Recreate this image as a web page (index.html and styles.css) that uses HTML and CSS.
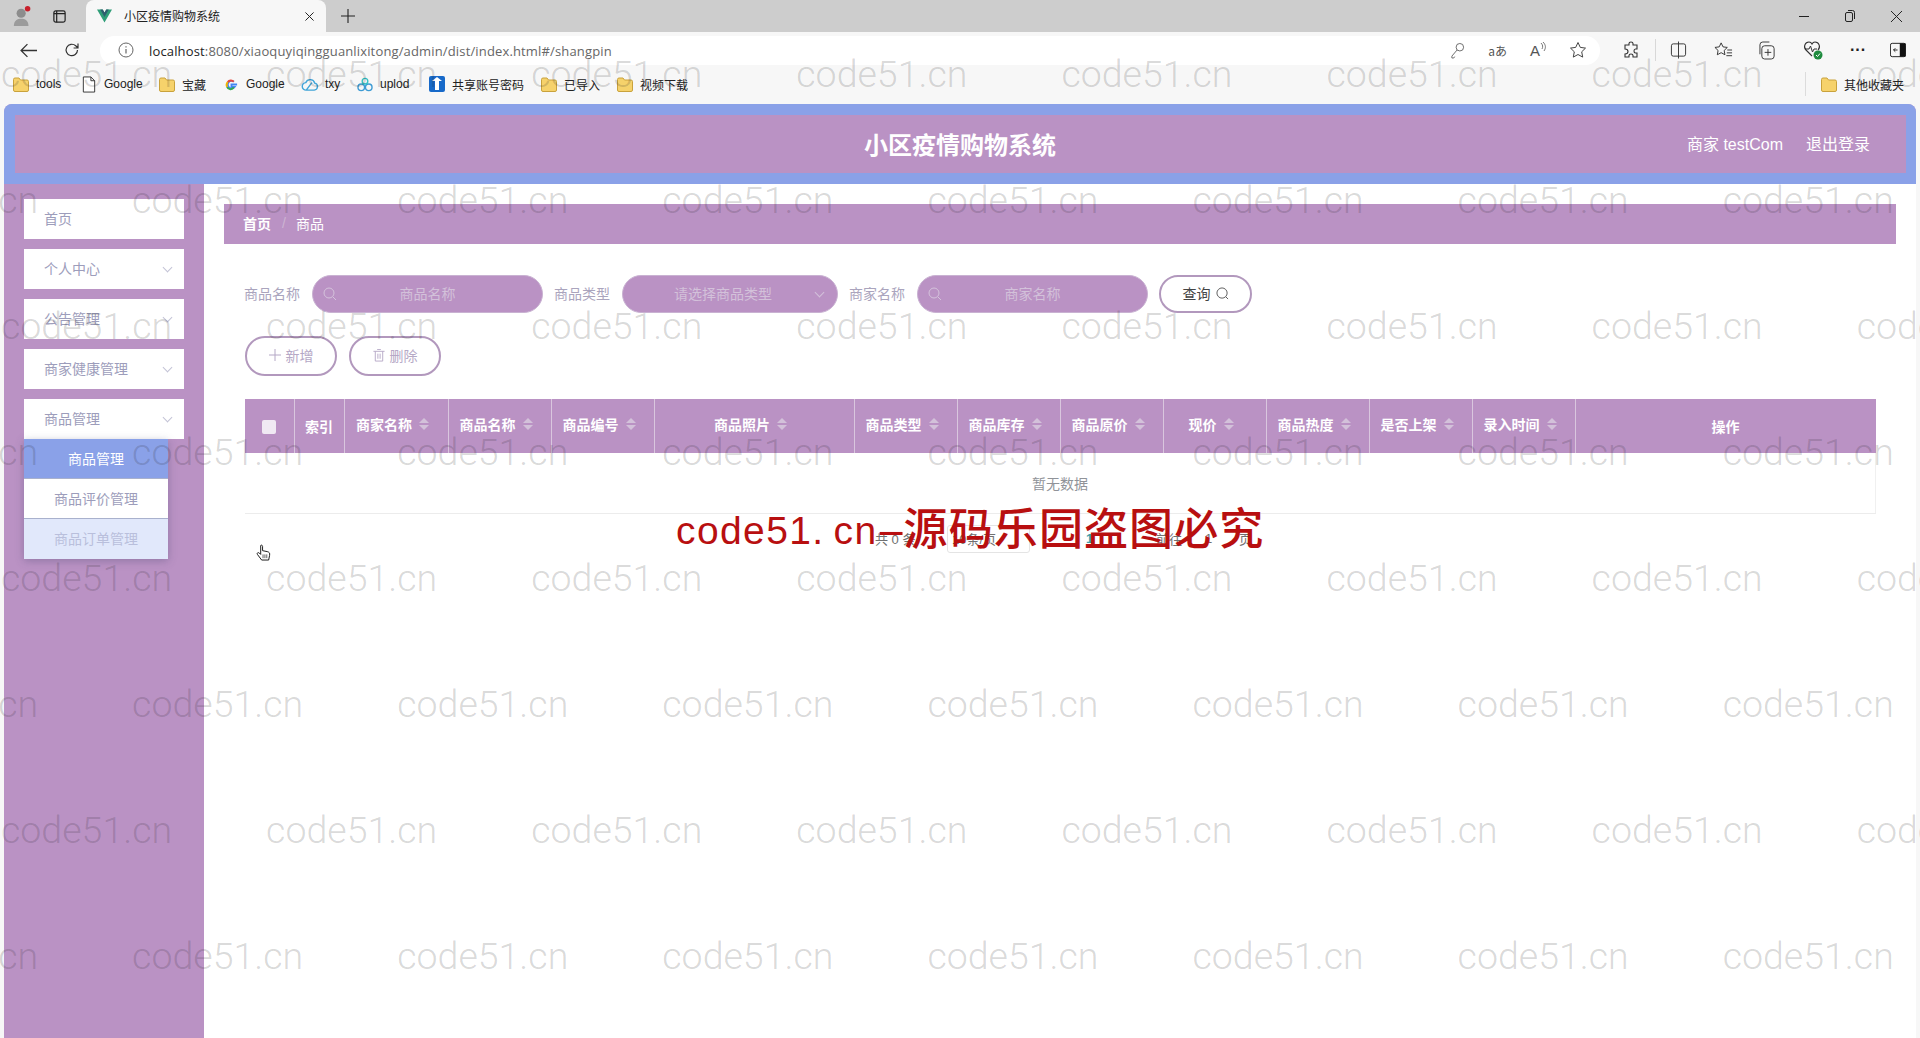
FILE: index.html
```html
<!DOCTYPE html>
<html lang="zh-CN">
<head>
<meta charset="utf-8">
<title>小区疫情购物系统</title>
<link rel="stylesheet" href="styles.css">
</head>
<body>
<div class="tabbar">
  <svg class="ic profile" viewBox="0 0 24 24" width="22" height="24"><circle cx="10" cy="9" r="5" fill="#8d8d8d"/><path d="M2 23c0-6 4-8 8-8s8 2 8 8z" fill="#9b9b9b"/><circle cx="17" cy="4" r="3" fill="#c8202c"/></svg>
  <svg class="ic winbtn" viewBox="0 0 16 16" width="15" height="15"><rect x="2" y="2" width="12" height="12" rx="2" fill="none" stroke="#222" stroke-width="1.3"/><path d="M2 5h12M5 2v12" stroke="#222" stroke-width="1.3"/></svg>
  <div class="tab">
    <svg class="ic" viewBox="0 0 16 14" width="15" height="14"><path d="M0 0h6l2 3.500L10 0h6L8 14z" fill="#2f9e78"/><path d="M3.500 0h2.700L8 3.300 9.800 0h2.700L8 8z" fill="#2f5f6f"/></svg>
    <span class="tab-title">小区疫情购物系统</span>
    <svg class="ic tab-x" viewBox="0 0 10 10" width="9" height="9"><path d="M.5.500l9 9M9.500.500l-9 9" stroke="#222" stroke-width="1.100"/></svg>
  </div>
  <svg class="ic plus" viewBox="0 0 14 14" width="14" height="14"><path d="M7 0v14M0 7h14" stroke="#222" stroke-width="1.100"/></svg>
  <div class="winctl">
    <svg class="ic" viewBox="0 0 10 10" width="10" height="10"><path d="M0 5.500h10" stroke="#222"/></svg>
    <svg class="ic" viewBox="0 0 10 12" width="10" height="12"><rect x=".5" y="2.500" width="7" height="9" rx="1.500" fill="none" stroke="#222"/><path d="M3 .500h4.500a2 2 0 0 1 2 2V9" fill="none" stroke="#222"/></svg>
    <svg class="ic" viewBox="0 0 10 10" width="11" height="11"><path d="M0 0l10 10M10 0L0 10" stroke="#222" stroke-width=".9"/></svg>
  </div>
</div>

<div class="toolbar">
  <svg class="ic back" viewBox="0 0 16 14" width="17" height="15"><path d="M16 7H1M7 1L1 7l6 6" fill="none" stroke="#333" stroke-width="1.200"/></svg>
  <svg class="ic reload" viewBox="0 0 16 16" width="16" height="16"><path d="M13.500 8a5.700 5.700 0 1 1-1.800-4.200L14 6M14 1.500V6H9.600" fill="none" stroke="#333" stroke-width="1.200"/></svg>
  <div class="addr">
    <svg class="ic" viewBox="0 0 16 16" width="16" height="16"><circle cx="8" cy="8" r="7" fill="none" stroke="#666"/><path d="M8 7v4.500M8 4.200v1.300" stroke="#666" stroke-width="1.200"/></svg>
    <span class="url"><b>localhost</b>:8080/xiaoquyiqingguanlixitong/admin/dist/index.html#/shangpin</span>
    <div class="addr-tools">
      <svg class="ic" viewBox="0 0 16 18" width="15" height="17"><circle cx="10.500" cy="5.500" r="4" fill="none" stroke="#666"/><path d="M7.500 8.500L2 15v2h2l1-1.500" fill="none" stroke="#666"/></svg>
      <span class="aa">aあ</span>
      <span class="ra">A<svg class="ic" viewBox="0 0 6 12" width="6" height="12"><path d="M1 1c2 2 2 4 1 6M3 0c3 3 3 6 1 9" fill="none" stroke="#555" stroke-width=".8"/></svg></span>
      <svg class="ic" viewBox="0 0 18 18" width="18" height="18"><path d="M9 1.500l2.300 4.900 5.200.7-3.800 3.700 1 5.300L9 13.500l-4.700 2.600 1-5.300L1.500 7.100l5.200-.7z" fill="none" stroke="#444" stroke-width="1"/></svg>
    </div>
  </div>
  <div class="tools">
    <svg class="ic" viewBox="0 0 18 18" width="18" height="18"><path d="M7 2.500c0-2 4-2 4 0V4h4v4h-1.500c-2 0-2 4 0 4H15v4h-4v-1.500c0-2-4-2-4 0V16H3v-3c2 0 3-1 3-2.500S5 8 3 8V4h4z" fill="none" stroke="#333" stroke-width="1.100"/></svg>
    <span class="sep"></span>
    <svg class="ic" viewBox="0 0 18 18" width="17" height="18"><rect x="1.500" y="2.500" width="15" height="13" rx="2" fill="none" stroke="#333"/><path d="M9 0v18" stroke="#333"/></svg>
    <svg class="ic" viewBox="0 0 20 18" width="19" height="18"><path d="M7.500 1.500l2 4.200 4.500.6-3.300 3.200.8 4.500-4-2.200-4 2.200.8-4.500L1 6.300l4.500-.6zM14 9h5M13.500 12H19M13 15h6" fill="none" stroke="#333"/></svg>
    <svg class="ic" viewBox="0 0 18 20" width="17" height="19"><rect x="3" y="5" width="13" height="14" rx="3" fill="none" stroke="#333"/><path d="M1 14V4a3 3 0 0 1 3-3h7M9.500 8.500v7M6 12h7" fill="none" stroke="#333"/></svg>
    <span class="heart"><svg class="ic" viewBox="0 0 20 20" width="20" height="20"><path d="M9 16L3 10C0 7 2 2 6 2c1.500 0 2.500 1 3 2 .5-1 1.500-2 3-2 4 0 6 5 3 8" fill="none" stroke="#333" stroke-width="1.100"/><path d="M2 9h4l1.500-3 2 6 1.500-3h3" fill="none" stroke="#333"/><circle cx="15" cy="15" r="4.500" fill="#1f8c3f"/><path d="M13 15l1.500 1.500 2.500-3" fill="none" stroke="#fff"/></svg></span>
    <span class="dots">···</span>
    <svg class="ic side-ic" viewBox="0 0 18 18" width="16" height="16"><rect x=".5" y="1.500" width="17" height="15" rx="2" fill="none" stroke="#111"/><rect x="11" y="1.500" width="6.500" height="15" fill="#111"/><path d="M8.500 9H4M6 7L4 9l2 2" fill="none" stroke="#111"/></svg>
  </div>
</div>

<div class="bookmarks">
  <span class="bm"><svg viewBox="0 0 16 15" width="16" height="15"><path d="M.5 2.500a1.500 1.500 0 0 1 1.500-1.500h4l1.500 2H14a1.500 1.500 0 0 1 1.500 1.500V13a1.500 1.500 0 0 1-1.500 1.500H2A1.500 1.500 0 0 1 .5 13z" fill="#f6d26b" stroke="#c9a23c"/></svg>tools</span>
  <span class="bm"><svg viewBox="0 0 14 18" width="13" height="17"><path d="M1 1h8l4 4v12H1zM9 1v4h4" fill="#fff" stroke="#333"/></svg>Google</span>
  <span class="bm"><svg viewBox="0 0 16 15" width="16" height="15"><path d="M.5 2.500a1.500 1.500 0 0 1 1.500-1.500h4l1.500 2H14a1.500 1.500 0 0 1 1.500 1.500V13a1.500 1.500 0 0 1-1.500 1.500H2A1.500 1.500 0 0 1 .5 13z" fill="#f6d26b" stroke="#c9a23c"/></svg>宝藏</span>
  <span class="bm"><svg viewBox="0 0 16 16" width="14" height="15"><path d="M14.500 8H8.500v2.500h3.300A4 4 0 1 1 11 5" fill="none" stroke="#4285f4" stroke-width="2"/><path d="M4.500 5.500A4.200 4.200 0 0 1 11 5" fill="none" stroke="#e8483c" stroke-width="2"/><path d="M3.800 10.500A4 4 0 0 0 11 11" fill="none" stroke="#34a853" stroke-width="2"/><path d="M3.800 10.500a4.500 4.500 0 0 1 .7-5" fill="none" stroke="#f5b400" stroke-width="2"/></svg>Google</span>
  <span class="bm"><svg viewBox="0 0 18 16" width="17" height="15"><path d="M5 14a4 4 0 0 1-.5-8A5 5 0 0 1 14 6.500 3.800 3.800 0 0 1 13.500 14zM5 14l6-8" fill="none" stroke="#41a5d8" stroke-width="1.500"/></svg>txy</span>
  <span class="bm"><svg viewBox="0 0 18 16" width="17" height="15"><circle cx="5" cy="11" r="3.500" fill="none" stroke="#3d9bd4" stroke-width="1.500"/><circle cx="13" cy="11" r="3.500" fill="none" stroke="#3d9bd4" stroke-width="1.500"/><circle cx="9" cy="4.500" r="3" fill="none" stroke="#35c0c4" stroke-width="1.500"/></svg>uplod</span>
  <span class="bm"><svg viewBox="0 0 16 16" width="15" height="16"><rect width="16" height="16" rx="2" fill="#1769c9"/><path d="M3 5l5-4 5 4h-3v9H6V5z" fill="#fff"/></svg>共享账号密码</span>
  <span class="bm"><svg viewBox="0 0 16 15" width="16" height="15"><path d="M.5 2.500a1.500 1.500 0 0 1 1.500-1.500h4l1.500 2H14a1.500 1.500 0 0 1 1.500 1.500V13a1.500 1.500 0 0 1-1.500 1.500H2A1.500 1.500 0 0 1 .5 13z" fill="#f6d26b" stroke="#c9a23c"/></svg>已导入</span>
  <span class="bm"><svg viewBox="0 0 16 15" width="16" height="15"><path d="M.5 2.500a1.500 1.500 0 0 1 1.500-1.500h4l1.500 2H14a1.500 1.500 0 0 1 1.500 1.500V13a1.500 1.500 0 0 1-1.500 1.500H2A1.500 1.500 0 0 1 .5 13z" fill="#f6d26b" stroke="#c9a23c"/></svg>视频下载</span>
  <span class="bm bm-other"><svg viewBox="0 0 16 15" width="16" height="15"><path d="M.5 2.500a1.500 1.500 0 0 1 1.500-1.500h4l1.500 2H14a1.500 1.500 0 0 1 1.500 1.500V13a1.500 1.500 0 0 1-1.500 1.500H2A1.500 1.500 0 0 1 .5 13z" fill="#f6d26b" stroke="#c9a23c"/></svg>其他收藏夹</span>
</div>

<div class="app">
  <header class="head">
    <div class="head-title">小区疫情购物系统</div>
    <div class="head-user"><span>商家 testCom</span><span>退出登录</span></div>
  </header>
  <div class="body">
    <aside class="side">
      <div class="nav">首页</div>
      <div class="nav">个人中心<i class="chev"></i></div>
      <div class="nav">公告管理<i class="chev"></i></div>
      <div class="nav">商家健康管理<i class="chev"></i></div>
      <div class="nav nav-open">商品管理<i class="chev"></i></div>
      <div class="sub">
        <div class="sub-item sub-active">商品管理</div>
        <div class="sub-item">商品评价管理</div>
        <div class="sub-item sub-hover">商品订单管理</div>
      </div>
    </aside>
    <main class="main">
      <div class="crumb"><b>首页</b><span class="slash">/</span><span>商品</span></div>
      <div class="panel">
        <div class="form">
          <label class="lbl">商品名称</label>
          <div class="field w231"><svg class="ic fi" viewBox="0 0 14 14" width="14" height="14"><circle cx="6" cy="6" r="5" fill="none" stroke="#d5c3dc"/><path d="M10 10l3 3" stroke="#d5c3dc"/></svg><span class="ph">商品名称</span></div>
          <label class="lbl gap">商品类型</label>
          <div class="field w216"><span class="ph ph-sel">请选择商品类型</span><i class="chev chev-f"></i></div>
          <label class="lbl gap">商家名称</label>
          <div class="field w231"><svg class="ic fi" viewBox="0 0 14 14" width="14" height="14"><circle cx="6" cy="6" r="5" fill="none" stroke="#d5c3dc"/><path d="M10 10l3 3" stroke="#d5c3dc"/></svg><span class="ph">商家名称</span></div>
          <button class="btn btn-q">查询<svg class="ic" viewBox="0 0 14 14" width="13" height="13"><circle cx="6.500" cy="6.500" r="5.500" fill="none" stroke="#555"/><path d="M10.500 10.500l2.500 2.500" stroke="#555"/></svg></button>
        </div>
        <div class="actions">
          <button class="btn btn-a"><svg class="ic" viewBox="0 0 12 12" width="12" height="12"><path d="M6 0v12M0 6h12" stroke="#b5a8c6"/></svg>新增</button>
          <button class="btn btn-a"><svg class="ic" viewBox="0 0 12 14" width="12" height="13"><path d="M0 2.500h12M2 2.500V13h8V2.500M4 .500h4M4.800 5v5.500M7.200 5v5.500" fill="none" stroke="#b5a8c6"/></svg>删除</button>
        </div>
        <table class="grid">
          <colgroup>
            <col class="c49"><col class="c50"><col class="c104"><col class="c103"><col class="c103"><col class="c200"><col class="c103"><col class="c103"><col class="c103"><col class="c103"><col class="c103"><col class="c103"><col class="c103"><col>
          </colgroup>
          <thead>
            <tr>
              <th><i class="check"></i></th>
              <th>索引</th>
              <th class="s"><span>商家名称</span><i class="sort"></i></th>
              <th class="s"><span>商品名称</span><i class="sort"></i></th>
              <th class="s"><span>商品编号</span><i class="sort"></i></th>
              <th class="s"><span>商品照片</span><i class="sort"></i></th>
              <th class="s"><span>商品类型</span><i class="sort"></i></th>
              <th class="s"><span>商品库存</span><i class="sort"></i></th>
              <th class="s"><span>商品原价</span><i class="sort"></i></th>
              <th class="s"><span>现价</span><i class="sort"></i></th>
              <th class="s"><span>商品热度</span><i class="sort"></i></th>
              <th class="s"><span>是否上架</span><i class="sort"></i></th>
              <th class="s"><span>录入时间</span><i class="sort"></i></th>
              <th>操作</th>
            </tr>
          </thead>
          <tbody>
            <tr><td class="empty" colspan="14">暂无数据</td></tr>
          </tbody>
        </table>
        <div class="pager">
          <span class="p-total">共 0 条</span>
          <span class="p-size">10条/页</span>
          <span class="p-cur">1</span>
          <span class="p-go">前往</span>
          <span class="p-in">1</span>
          <span>页</span>
        </div>
      </div>
    </main>
  </div>
</div>

<svg class="cursor" viewBox="0 0 16 19" width="15" height="18"><path d="M5 1.500c1-1 2 0 2 1V7l5 1c2 .5 3 1.500 2.500 4l-1 5H6L1.500 11c-1-1.500 1-2.500 2-1.500L5 11z" fill="#fff" stroke="#111"/><path d="M7.500 11v4M9.500 11v4M11.500 11v4" stroke="#111" stroke-width=".7"/></svg>

<div class="marks">
  <div class="mrow"><span>code51.cn</span><span>code51.cn</span><span>code51.cn</span><span>code51.cn</span><span>code51.cn</span><span>code51.cn</span><span>code51.cn</span><span>code51.cn</span></div>
  <div class="mrow mrow-b"><span>code51.cn</span><span>code51.cn</span><span>code51.cn</span><span>code51.cn</span><span>code51.cn</span><span>code51.cn</span><span>code51.cn</span><span>code51.cn</span></div>
  <div class="mrow"><span>code51.cn</span><span>code51.cn</span><span>code51.cn</span><span>code51.cn</span><span>code51.cn</span><span>code51.cn</span><span>code51.cn</span><span>code51.cn</span></div>
  <div class="mrow mrow-b"><span>code51.cn</span><span>code51.cn</span><span>code51.cn</span><span>code51.cn</span><span>code51.cn</span><span>code51.cn</span><span>code51.cn</span><span>code51.cn</span></div>
  <div class="mrow"><span>code51.cn</span><span>code51.cn</span><span>code51.cn</span><span>code51.cn</span><span>code51.cn</span><span>code51.cn</span><span>code51.cn</span><span>code51.cn</span></div>
  <div class="mrow mrow-b"><span>code51.cn</span><span>code51.cn</span><span>code51.cn</span><span>code51.cn</span><span>code51.cn</span><span>code51.cn</span><span>code51.cn</span><span>code51.cn</span></div>
  <div class="mrow"><span>code51.cn</span><span>code51.cn</span><span>code51.cn</span><span>code51.cn</span><span>code51.cn</span><span>code51.cn</span><span>code51.cn</span><span>code51.cn</span></div>
  <div class="mrow mrow-b"><span>code51.cn</span><span>code51.cn</span><span>code51.cn</span><span>code51.cn</span><span>code51.cn</span><span>code51.cn</span><span>code51.cn</span><span>code51.cn</span></div>
</div>

<div class="stamp"><span class="stamp-l">code51<span class="stamp-dot">.</span>cn<span class="stamp-dash">-</span></span>源码乐园盗图必究</div>
</body>
</html>
```
FILE: styles.css
```css
* { box-sizing: border-box; }
html, body { margin: 0; height: 100%; overflow: hidden; }
body {
  position: relative;
  width: 1920px;
  height: 1038px;
  display: flex;
  flex-direction: column;
  background: #f7f7f7;
  font-family: "Liberation Sans", "Noto Sans CJK SC", sans-serif;
  font-size: 14px;
  color: #333;
}
.ic { display: block; flex: none; }

/* browser chrome */
.tabbar {
  height: 32px;
  flex: none;
  background: #cdcdcd;
  display: flex;
  align-items: center;
}
.profile { margin-left: 12px; }
.winbtn { margin-left: 18px; }
.tab {
  margin-left: 19px;
  width: 240px;
  height: 32px;
  background: #f7f7f7;
  border-radius: 8px 8px 0 0;
  display: flex;
  align-items: center;
  padding-left: 11px;
  font-size: 12px;
  color: #222;
}
.tab-title { margin-left: 12px; flex: 1; padding-bottom: 2px; }
.tab-x { margin-right: 12px; }
.plus { margin-left: 15px; }
.winctl {
  margin-left: auto;
  display: flex;
  align-items: center;
  gap: 36px;
  padding-right: 18px;
}

.toolbar {
  height: 36px;
  flex: none;
  display: flex;
  align-items: center;
  background: #f7f7f7;
}
.back { margin-left: 20px; }
.reload { margin-left: 27px; }
.addr {
  margin-left: 20px;
  width: 1500px;
  height: 29px;
  background: #fff;
  border-radius: 15px;
  display: flex;
  align-items: center;
  padding: 0 13px 0 18px;
}
.url {
  margin-left: 15px;
  padding-top: 2px;
  font-size: 13px;
  color: #666;
  font-family: "Open Sans", sans-serif;
  letter-spacing: .15px;
}
.url b { font-weight: 400; color: #222; }
.addr-tools { margin-left: auto; display: flex; align-items: center; gap: 23px; }
.aa { font-size: 12px; color: #555; font-family: "Noto Sans CJK JP", sans-serif; }
.ra { display: flex; align-items: flex-start; font-size: 15px; color: #555; }
.tools { display: flex; align-items: center; margin-left: 22px; gap: 26.500px; }
.sep { width: 1px; height: 22px; background: #d8d8d8; margin: 0 -12px; }
.heart { display: block; }
.dots { font-size: 16px; font-weight: 700; color: #222; width: 18px; text-align: center; }
.side-ic { margin-left: -4px; }

.bookmarks {
  height: 36px;
  flex: none;
  padding: 0 12px 4px 12px;
  display: grid;
  grid-template-columns: 68px 78px 64px 79px 55px 72px 112px 76px 1fr auto;
  align-items: center;
  font-size: 12px;
  color: #222;
}
.bm { display: flex; align-items: center; white-space: nowrap; }
.bm svg { flex: 0 0 18px; margin-right: 6px; }
.bm-other { grid-column: 10; border-left: 1px solid #dcdcdc; padding: 0 2px 0 14px; margin-right: 2px; height: 24px; }

/* app */
.app {
  flex: 1;
  margin: 0 4px;
  background: #fff;
  display: flex;
  flex-direction: column;
  border-radius: 8px 8px 0 0;
  overflow: hidden;
}
.head {
  height: 80px;
  flex: none;
  background: #ba92c4;
  border: solid #8aa1e8;
  border-width: 11px 10px 11px 11px;
  display: flex;
  align-items: center;
  justify-content: center;
  position: relative;
  padding-bottom: 2px;
}
.head-title { font-size: 24px; font-weight: 700; color: #fff; margin-left: -1px; }
.head-user {
  position: absolute;
  right: 36px;
  top: 0;
  bottom: 2px;
  display: flex;
  align-items: center;
  gap: 23px;
  color: #fff;
  font-size: 16px;
}
.body { flex: 1; display: flex; min-height: 0; }
.side {
  width: 200px;
  flex: none;
  background: #ba92c4;
  padding: 15px 0 0 20px;
}
.nav {
  width: 160px;
  height: 40px;
  margin-bottom: 10px;
  background: #fff;
  display: flex;
  align-items: center;
  justify-content: space-between;
  padding: 0 13px 2px 20px;
  color: #9d9dbb;
}
.nav-open { margin-bottom: 0; }
.chev {
  display: block;
  width: 7px;
  height: 7px;
  border: solid #c3c3d6;
  border-width: 0 1px 1px 0;
  transform: rotate(45deg);
  margin-top: -2px;
}
.sub { width: 144px; box-shadow: 0 2px 8px rgba(70, 70, 110, .35); }
.sub-item {
  height: 40px;
  display: flex;
  align-items: center;
  justify-content: center;
  padding-bottom: 2px;
  background: #fff;
  color: #9d9dbb;
  border-bottom: 1px solid #a9b1cd;
}
.sub-active { background: #8aa1e8; color: #fff; }
.sub-hover { background: #e1e8fb; color: #b9bfdc; border-bottom: 0; }

.main { flex: 1; padding: 20px 20px 0; min-width: 0; }
.crumb {
  height: 40px;
  background: #ba92c4;
  color: #fff;
  display: flex;
  align-items: center;
  padding: 0 0 2px 19px;
  font-size: 14px;
}
.crumb b { font-weight: 700; }
.slash { margin: 0 10px 0 11px; color: #cdb4d3; }
.panel { padding: 31px 20px 0; }
.form { display: flex; align-items: center; height: 38px; }
.lbl { width: 56px; flex: none; margin-right: 12px; padding-bottom: 2px; color: #aaa4bd; }
.gap { margin-left: 11px; }
.field {
  height: 38px;
  background: #ba92c4;
  border: 1px solid #c9b2d2;
  border-radius: 19px;
  display: flex;
  align-items: center;
  position: relative;
  flex: none;
  justify-content: center;
  padding-bottom: 2px;
}
.w231 { width: 231px; }
.w216 { width: 216px; }
.fi { position: absolute; left: 10px; top: 11px; }
.ph { color: #d3c1da; }
.ph-sel { margin-right: 14px; }
.chev-f { position: absolute; right: 14px; top: 13px; border-color: #d3c1da; margin: 0; }
.btn {
  height: 38px;
  background: #fff;
  border: 2px solid #b298bd;
  border-radius: 20px;
  font: inherit;
  display: inline-flex;
  align-items: center;
  justify-content: center;
  gap: 5px;
  padding: 0 0 2px;
}
.btn-q { width: 93px; margin-left: 11px; color: #444; }
.actions { display: flex; gap: 12px; margin-top: 23px; padding-left: 1px; }
.btn-a { width: 92px; height: 40px; color: #b5a8c6; }

.grid { width: 1631px; margin: 23px 0 0 1px; border-collapse: collapse; table-layout: fixed; }
.c49 { width: 49px; }
.c50 { width: 50px; }
.c104 { width: 104px; }
.c103 { width: 103px; }
.c200 { width: 200px; }
.grid th {
  height: 54px;
  padding: 0;
  background: #ba92c4;
  color: #fff;
  font-size: 14px;
  font-weight: 700;
  border-right: 1px solid #d9c6de;
}
.grid th:last-child { border-right: 0; }
.grid th.s { padding: 0 7px 4px 0; }
.grid th.s span, .sort { vertical-align: middle; }
.check {
  display: inline-block;
  width: 14px;
  height: 14px;
  background: #f0e9f3;
  border-radius: 2px;
  vertical-align: middle;
}
.sort {
  display: inline-block;
  position: relative;
  width: 10px;
  height: 14px;
  margin-left: 7px;
}
.sort::before, .sort::after {
  content: "";
  position: absolute;
  left: 0;
  border: 5px solid transparent;
}
.sort::before { top: -4px; border-bottom-color: #d3c1da; }
.sort::after { bottom: -4px; border-top-color: #d3c1da; }
.empty {
  height: 60px;
  padding: 0;
  text-align: center;
  color: #909399;
  border-bottom: 1px solid #ececec;
  border-right: 1px solid #f0f0f0;
}
.pager {
  display: flex;
  align-items: center;
  height: 28px;
  margin-top: 11px;
  padding-left: 631px;
  font-size: 13px;
  color: #707070;
}
.p-total { width: 72px; }
.p-size {
  width: 83px;
  height: 28px;
  border: 1px solid #e4e4e4;
  border-radius: 3px;
  display: flex;
  align-items: center;
  padding-left: 4px;
}
.p-cur { margin-left: 56px; width: 70px; color: #409eaa; font-weight: 700; }
.p-go { width: 39px; }
.p-in {
  width: 44px;
  height: 28px;
  display: flex;
  align-items: center;
  padding-left: 10px;
}

/* overlays */
.marks {
  position: absolute;
  inset: 0;
  overflow: hidden;
  padding-top: 11px;
  pointer-events: none;
}
.mrow {
  display: flex;
  height: 126px;
  line-height: 126px;
  padding-left: 1px;
  font-family: Roboto, sans-serif;
  font-weight: 300;
  font-size: 37.500px;
  color: rgba(30, 30, 30, .18);
  white-space: nowrap;
}
.mrow span { flex: none; width: 265.100px; }
.mrow-b { padding-left: 0; margin-left: -133px; }
.stamp {
  position: absolute;
  left: 676px;
  top: 504px;
  line-height: 52px;
  font-size: 44px;
  font-weight: 500;
  letter-spacing: 1.100px;
  color: #b80f10;
  white-space: nowrap;
}
.stamp-l { font-size: 39px; letter-spacing: 1.400px; font-weight: 400; vertical-align: 1px; }
.stamp-dot { margin-right: 9px; }
.stamp-dash {
  display: inline-block;
  width: 26px;
  text-align: center;
  letter-spacing: 0;
  transform: scaleX(2.4);
}
.cursor { position: absolute; left: 256px; top: 544px; }
```
